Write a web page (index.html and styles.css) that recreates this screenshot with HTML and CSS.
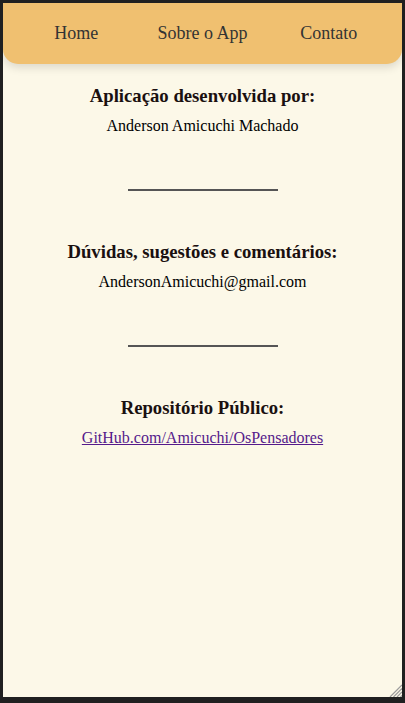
FILE: index.html
```html
<!DOCTYPE html>
<html lang="pt-BR">
<head>
<meta charset="utf-8">
<title>Sobre o App</title>
<link rel="stylesheet" href="styles.css">
</head>
<body>
<div class="frame">
  <header class="topbar">
    <nav class="nav">
      <a class="nav-link" href="#">Home</a>
      <a class="nav-link" href="#">Sobre o App</a>
      <a class="nav-link" href="#">Contato</a>
    </nav>
  </header>
  <main class="content">
    <section class="block">
      <h3 class="block-title">Aplicação desenvolvida por:</h3>
      <p class="block-text">Anderson Amicuchi Machado</p>
    </section>
    <hr class="divider">
    <section class="block">
      <h3 class="block-title">Dúvidas, sugestões e comentários:</h3>
      <p class="block-text">AndersonAmicuchi@gmail.com</p>
    </section>
    <hr class="divider">
    <section class="block">
      <h3 class="block-title">Repositório Público:</h3>
      <p class="block-text"><a class="repo-link" href="#">GitHub.com/Amicuchi/OsPensadores</a></p>
    </section>
  </main>
  <svg class="grip" width="13" height="13" viewBox="0 0 13 13" aria-hidden="true">
    <g stroke="#9a9a9a" stroke-width="1.2">
      <line x1="13" y1="1" x2="1" y2="13"/>
      <line x1="13" y1="4.5" x2="4.5" y2="13"/>
      <line x1="13" y1="8" x2="8" y2="13"/>
      <line x1="13" y1="11.5" x2="11.5" y2="13"/>
    </g>
  </svg>
</div>
</body>
</html>
```

FILE: styles.css
```css
* { box-sizing: border-box; }
html, body {
  margin: 0;
  padding: 0;
  height: 100%;
  background: #202020;
}
body {
  padding: 3px 3px 6px 3px;
  font-family: "Liberation Serif", "Times New Roman", serif;
}
.frame {
  position: relative;
  height: 100%;
  background: #fcf8e8;
  overflow: hidden;
  display: flex;
  flex-direction: column;
}
.topbar {
  background: #f0c070;
  height: 61px;
  border-radius: 0 0 15px 15px;
  box-shadow: 0 4px 8px rgba(0, 0, 0, 0.12);
  padding: 0 10px;
  display: flex;
  align-items: center;
}
.nav {
  flex: 1;
  display: flex;
}
.nav-link {
  flex: 1;
  text-align: center;
  color: #333;
  text-decoration: none;
  font-size: 18px;
  line-height: 22px;
  padding-bottom: 2px;
}
.content {
  display: flex;
  flex-direction: column;
  align-items: center;
  padding-top: 21px;
}
.block {
  display: flex;
  flex-direction: column;
  align-items: center;
}
.block-title {
  margin: 0;
  font-size: 18.72px;
  line-height: 22px;
  font-weight: bold;
  color: #1a1010;
}
.block-text {
  margin: 10px 0 0;
  font-size: 16px;
  line-height: 18px;
  color: #000;
}
.repo-link {
  color: #551a8b;
}
.divider {
  width: 150px;
  margin: 54px 0 50px;
  border: 0;
  border-top: 2px solid #555;
  height: 0;
}
.grip {
  position: absolute;
  right: 0;
  bottom: 0;
}
```
